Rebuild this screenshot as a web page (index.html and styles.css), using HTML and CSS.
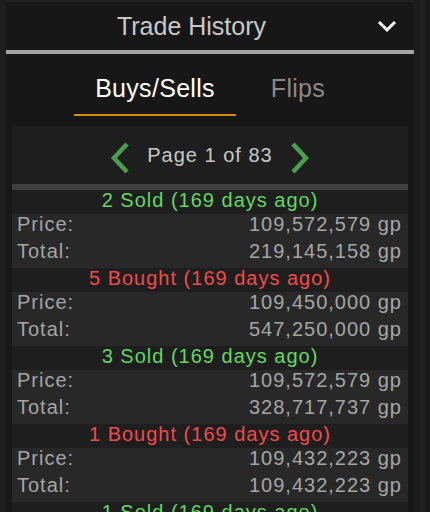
FILE: index.html
```html
<!DOCTYPE html>
<html>
<head>
<meta charset="utf-8">
<link rel="stylesheet" href="styles.css">
</head>
<body>
<div class="app">
  <div class="gutter"></div>
  <div class="panel">
    <div class="topstrip"></div>
    <div class="header">
      <div class="title">Trade History</div>
      <svg class="chevron" width="20" height="14" viewBox="0 0 20 14"><polyline points="2,3 10,11 18,3" fill="none" stroke="#ffffff" stroke-width="3"/></svg>
    </div>
    <div class="tabs">
      <div class="tab tab-active">Buys/Sells</div>
      <div class="tab tab-flips">Flips</div>
    </div>
    <div class="content">
      <div class="nav">
        <svg class="arrow" width="20" height="32" viewBox="0 0 20 32"><polyline points="17,2 4,16 17,30" fill="none" stroke="#4a9f4d" stroke-width="4.5"/></svg>
        <div class="page">Page 1 of 83</div>
        <svg class="arrow" width="20" height="32" viewBox="0 0 20 32"><polyline points="3,2 16,16 3,30" fill="none" stroke="#4a9f4d" stroke-width="4.5"/></svg>
      </div>
      <div class="sep"></div>
      <div class="trade">
        <div class="trade-head sold">2 Sold (169 days ago)</div>
        <div class="row"><span>Price:</span><span>109,572,579 gp</span></div>
        <div class="row"><span>Total:</span><span>219,145,158 gp</span></div>
      </div>
      <div class="trade">
        <div class="trade-head bought">5 Bought (169 days ago)</div>
        <div class="row"><span>Price:</span><span>109,450,000 gp</span></div>
        <div class="row"><span>Total:</span><span>547,250,000 gp</span></div>
      </div>
      <div class="trade">
        <div class="trade-head sold">3 Sold (169 days ago)</div>
        <div class="row"><span>Price:</span><span>109,572,579 gp</span></div>
        <div class="row"><span>Total:</span><span>328,717,737 gp</span></div>
      </div>
      <div class="trade">
        <div class="trade-head bought">1 Bought (169 days ago)</div>
        <div class="row"><span>Price:</span><span>109,432,223 gp</span></div>
        <div class="row"><span>Total:</span><span>109,432,223 gp</span></div>
      </div>
      <div class="trade">
        <div class="trade-head sold">1 Sold (169 days ago)</div>
      </div>
    </div>
  </div>
  <div class="scroll">
    <div class="scroll-a"></div>
    <div class="scroll-b"></div>
    <div class="scroll-c"></div>
  </div>
</div>
</body>
</html>
```

FILE: styles.css
```css
* { box-sizing: border-box; }
html, body {
  margin: 0;
  padding: 0;
  background: #1e1e1e;
  overflow: hidden;
}
body {
  font-family: "Liberation Sans", Arial, sans-serif;
  width: 430px;
  height: 512px;
}
.app {
  display: flex;
  height: 512px;
  overflow: hidden;
}
.gutter {
  width: 6px;
  flex: none;
  background: #1e1e1e;
}
.panel {
  width: 408px;
  flex: none;
  background: #171717;
  display: flex;
  flex-direction: column;
  overflow: hidden;
}
.panel > * { flex-shrink: 0; }
.topstrip {
  height: 2px;
  background: #202020;
}
.header {
  height: 52px;
  display: flex;
  align-items: center;
  border-bottom: 4px solid #a5a5a5;
}
.title {
  flex: 1;
  text-align: center;
  font-size: 25px;
  line-height: 48px;
  color: #c8c8c8;
}
.chevron {
  flex: none;
  margin-right: 17px;
}
.tabs {
  display: flex;
  padding-left: 68px;
  margin-bottom: 10px;
}
.tab {
  font-size: 25px;
  line-height: 28px;
  padding-top: 20px;
  padding-bottom: 12px;
  border-bottom: 2px solid transparent;
  text-align: center;
  letter-spacing: 0.3px;
}
.tab-active {
  width: 162px;
  color: #ffffff;
  border-bottom-color: #dc8a00;
}
.tab-flips {
  width: 124px;
  color: #8a8a8a;
}
.content {
  margin: 0 6px;
  background: #1e1e1e;
  flex: 1 0 auto;
}
.nav {
  height: 58px;
  display: flex;
  align-items: center;
  justify-content: center;
  gap: 17px;
}
.arrow {
  margin-top: 6px;
}
.page {
  font-size: 20px;
  line-height: 22px;
  letter-spacing: 1px;
  color: #c8c8c8;
}
.sep {
  height: 6px;
  background: #3f3f3f;
}
.trade-head {
  height: 24px;
  line-height: 21px;
  padding-bottom: 3px;
  text-align: center;
  font-size: 20px;
  letter-spacing: 1px;
  background: #1e1e1e;
}
.sold { color: #62d862; }
.bought { color: #f24a4a; }
.row {
  height: 27px;
  line-height: 21px;
  padding: 0 6px 6px 5px;
  display: flex;
  justify-content: space-between;
  background: #282828;
  color: #a5a5a5;
  font-size: 20px;
  letter-spacing: 1px;
}
.scroll {
  width: 16px;
  flex: none;
  display: flex;
}
.scroll-a { width: 6px; background: #1b1b1b; }
.scroll-b { width: 5px; background: #222222; }
.scroll-c { width: 5px; background: #1a1a1a; }
```
